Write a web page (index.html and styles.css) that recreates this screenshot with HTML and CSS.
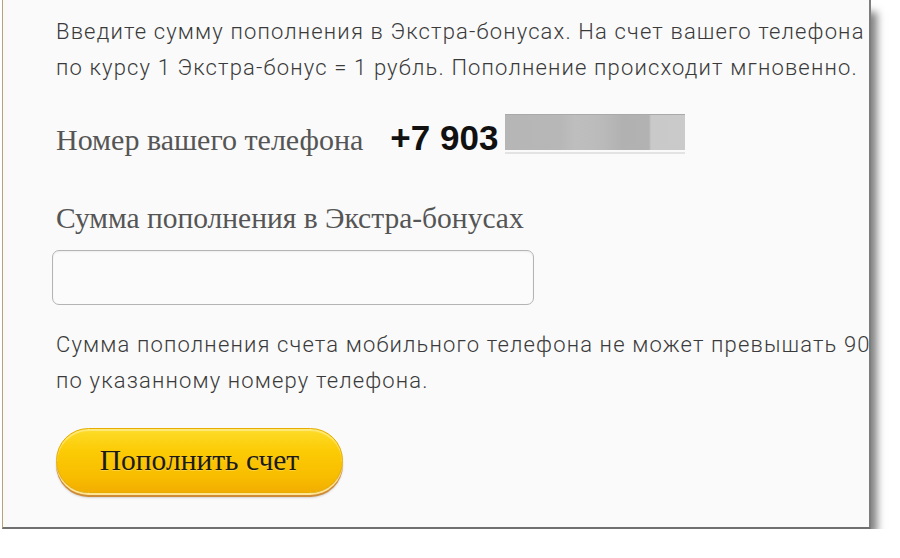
FILE: index.html
```html
<!DOCTYPE html>
<html lang="ru">
<head>
<meta charset="utf-8">
<title>Пополнение счета</title>
<link rel="stylesheet" href="styles.css">
</head>
<body>
<div class="panel">
  <p class="intro">Введите сумму пополнения в Экстра-бонусах. На счет вашего телефона<br>по курсу 1 Экстра-бонус = 1 рубль. Пополнение происходит мгновенно.</p>
  <div class="phone-row">
    <span class="label">Номер вашего телефона</span>
    <span class="number">+7 903</span>
    <span class="mask"></span>
  </div>
  <div class="label label-sum">Сумма пополнения в Экстра-бонусах</div>
  <input class="field" type="text" aria-label="Сумма пополнения в Экстра-бонусах">
  <p class="note">Сумма пополнения счета мобильного телефона не может превышать 900<br>по указанному номеру телефона.</p>
  <button class="btn" type="button">Пополнить счет</button>
</div>
</body>
</html>
```

FILE: styles.css
```css
html, body {
  margin: 0;
  padding: 0;
  background: #ffffff;
}

.panel {
  box-sizing: border-box;
  margin-left: 2px;
  width: 869px;
  height: 529px;
  padding: 14px 0 0 53px;
  background: #fafafa;
  border-left: 1px solid #b3a57a;
  border-right: 2px solid #7d7d7d;
  border-bottom: 2px solid #707070;
  box-shadow: 9px 9px 8px -3px rgba(0, 0, 0, 0.5);
  overflow: hidden;
  white-space: nowrap;
}

.intro,
.note {
  margin: 0;
  font-family: Roboto, "Liberation Sans", sans-serif;
  font-weight: 300;
  font-size: 22px;
  line-height: 36px;
  letter-spacing: 1.15px;
  color: #3a3a3a;
}

.phone-row {
  display: flex;
  align-items: baseline;
  margin-top: 28px;
}

.label {
  font-family: "Liberation Serif", serif;
  font-size: 30px;
  line-height: 40px;
  color: #555555;
}

.number {
  margin-left: 27px;
  font-family: "Liberation Sans", Arial, sans-serif;
  font-weight: 700;
  font-size: 35px;
  line-height: 40px;
  color: #111111;
}

.mask {
  display: inline-block;
  box-sizing: border-box;
  width: 180px;
  height: 36px;
  margin-left: 7px;
  border-top: 1px solid #a9a9a9;
  background-image: linear-gradient(90deg,
    #b6b6b6 0px, #b7b7b7 55px, #bebebe 70px, #bcbcbc 88px,
    #b9b9b9 100px, #b1b1b1 118px, #b2b2b2 144px,
    #c9c9c9 146px, #cacaca 180px);
  box-shadow: 0 2px 0 #fafafa, 0 4px 0 #e3e3e3;
}

.label-sum {
  margin-top: 38px;
  font-size: 29.5px;
}

.field {
  display: block;
  box-sizing: border-box;
  width: 482px;
  height: 55px;
  margin: 12px 0 0 -4px;
  border: 1px solid #b4b4b4;
  border-radius: 7px;
  background: #fbfbfb;
  box-shadow: inset 0 1px 2px rgba(0, 0, 0, 0.06);
}

.note {
  margin-top: 21.5px;
}

.btn {
  display: block;
  box-sizing: border-box;
  width: 287px;
  height: 65px;
  margin-top: 29.5px;
  padding: 0;
  border: 1px solid #e6ad00;
  border-radius: 33px;
  background: linear-gradient(180deg, #fddc2a 0%, #fccb05 35%, #f8bd00 75%, #f3ae00 100%);
  box-shadow:
    inset 0 2px 1px rgba(255, 240, 160, 0.7),
    0 2px 0 #ffe594,
    0 4px 0 #cf8a36,
    0 5px 2px rgba(0, 0, 0, 0.15);
  font-family: "Liberation Serif", serif;
  font-size: 29.5px;
  color: #1e1a10;
  text-shadow: 0 1px 0 rgba(255, 230, 120, 0.5);
}
```
